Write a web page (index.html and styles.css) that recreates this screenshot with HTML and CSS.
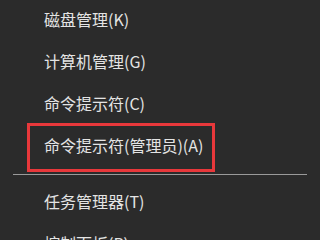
FILE: index.html
```html
<!DOCTYPE html>
<html lang="zh-CN">
<head>
<meta charset="utf-8">
<title>快速链接菜单</title>
<link rel="stylesheet" href="styles.css">
</head>
<body>
<ul class="menu">
  <li class="item">磁盘管理(K)</li>
  <li class="item">计算机管理(G)</li>
  <li class="item">命令提示符(C)</li>
  <li class="item item--marked">命令提示符(管理员)(A)</li>
  <li class="sep" role="separator"></li>
  <li class="item">任务管理器(T)</li>
  <li class="item">控制面板(P)</li>
</ul>
</body>
</html>
```

FILE: styles.css
```css
html, body {
  margin: 0;
  padding: 0;
  background: #2b2b2b;
  height: 100%;
  overflow: hidden;
}

.menu {
  list-style: none;
  margin: -2px 0 0 0;
  padding: 0;
  font-family: "Noto Sans CJK SC", "Noto Sans", sans-serif;
  font-size: 16px;
  color: #e4e4e4;
}

.item {
  position: relative;
  height: 42px;
  line-height: 42px;
  padding-left: 44px;
  white-space: nowrap;
}

.item--marked::after {
  content: "";
  position: absolute;
  left: 27px;
  top: -1px;
  width: 188px;
  height: 49px;
  box-sizing: border-box;
  border: 3px solid #e8383b;
}

.sep {
  height: 1px;
  margin: 8px 13px 5px 13px;
  background: #9a9a9a;
}
```
